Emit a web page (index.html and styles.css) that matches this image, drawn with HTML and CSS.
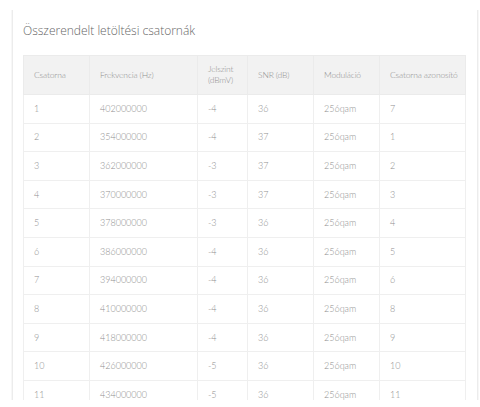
FILE: index.html
```html
<!DOCTYPE html>
<html lang="hu">
<head>
<meta charset="utf-8">
<title>Összerendelt letöltési csatornák</title>
<link rel="stylesheet" href="styles.css">
</head>
<body>
<div class="viewport">
  <section class="card">
    <h2 class="title">Összerendelt letöltési csatornák</h2>
    <table class="channels">
      <colgroup>
        <col class="c1"><col class="c2"><col class="c3"><col class="c4"><col class="c5"><col class="c6">
      </colgroup>
      <thead>
        <tr><th>Csatorna</th><th>Frekvencia (Hz)</th><th>Jelszint<br>(dBmV)</th><th>SNR (dB)</th><th>Moduláció</th><th>Csatorna azonosító</th></tr>
      </thead>
      <tbody>
        <tr><td>1</td><td>402000000</td><td>-4</td><td>36</td><td>256qam</td><td>7</td></tr>
        <tr><td>2</td><td>354000000</td><td>-4</td><td>37</td><td>256qam</td><td>1</td></tr>
        <tr><td>3</td><td>362000000</td><td>-3</td><td>37</td><td>256qam</td><td>2</td></tr>
        <tr><td>4</td><td>370000000</td><td>-3</td><td>37</td><td>256qam</td><td>3</td></tr>
        <tr><td>5</td><td>378000000</td><td>-3</td><td>36</td><td>256qam</td><td>4</td></tr>
        <tr><td>6</td><td>386000000</td><td>-4</td><td>36</td><td>256qam</td><td>5</td></tr>
        <tr><td>7</td><td>394000000</td><td>-4</td><td>36</td><td>256qam</td><td>6</td></tr>
        <tr><td>8</td><td>410000000</td><td>-4</td><td>36</td><td>256qam</td><td>8</td></tr>
        <tr><td>9</td><td>418000000</td><td>-4</td><td>36</td><td>256qam</td><td>9</td></tr>
        <tr><td>10</td><td>426000000</td><td>-5</td><td>36</td><td>256qam</td><td>10</td></tr>
        <tr><td>11</td><td>434000000</td><td>-5</td><td>36</td><td>256qam</td><td>11</td></tr>
      </tbody>
    </table>
  </section>
</div>
</body>
</html>
```
FILE: styles.css
```css
html, body {
  margin: 0;
  padding: 0;
  background: #fff;
}
body {
  font-family: "Open Sans", "Liberation Sans", sans-serif;
  font-weight: 300;
  color: #999;
}
.viewport {
  height: 400px;
  overflow: hidden;
}
.card {
  margin: 10px 2px 0 12px;
  border-left: 1px solid #ececec;
  border-right: 1px solid #ececec;
  box-shadow: -1px 0 0 #f7f7f7, 1px 0 0 #f7f7f7;
  padding: 13px 11px 20px 10px;
}
.title {
  margin: 0 0 16px 0;
  font-size: 12px;
  line-height: 16px;
  font-weight: 300;
  color: #666;
}
.channels {
  width: 442px;
  border-collapse: collapse;
  table-layout: fixed;
  font-family: "Lato", "Open Sans", sans-serif;
  font-size: 9px;
}
.c1 { width: 66px; }
.c2 { width: 108px; }
.c3 { width: 50px; }
.c4 { width: 66px; }
.c5 { width: 66px; }
.c6 { width: 86px; }
.channels th,
.channels td {
  border: 1px solid #efefef;
  padding: 0 0 0 10px;
  text-align: left;
  font-weight: 300;
  color: #8f8f8f;
  white-space: nowrap;
}
.channels th {
  background: #f2f2f2;
  height: 38px;
  line-height: 11px;
  font-size: 8.5px;
  letter-spacing: -0.15px;
  border-color: #ebebeb;
}
.channels td {
  height: 27.6px;
  line-height: 12px;
}
```
